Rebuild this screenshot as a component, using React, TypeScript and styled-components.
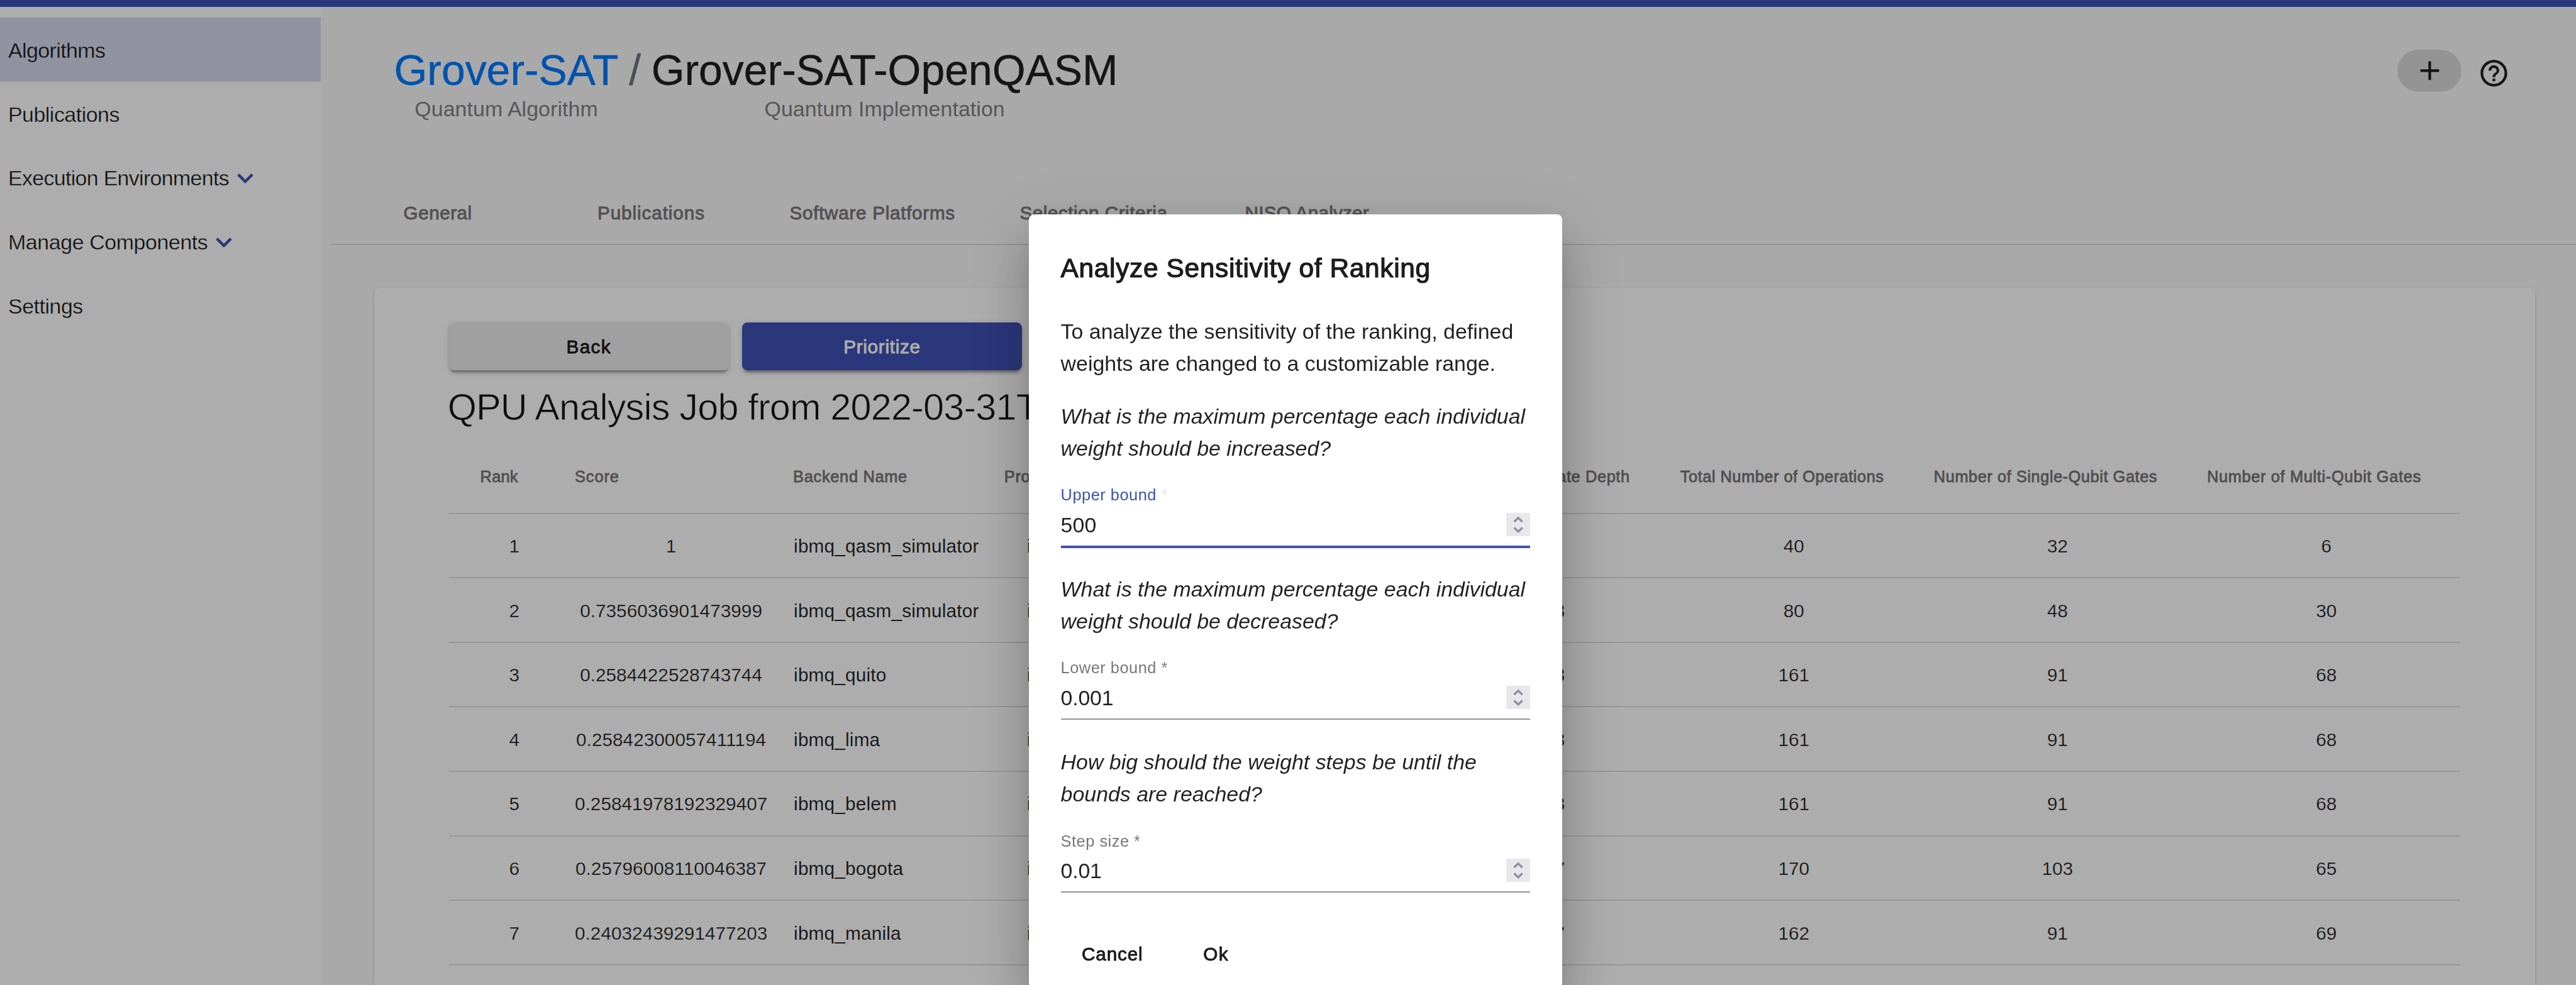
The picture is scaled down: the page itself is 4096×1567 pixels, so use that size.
import React from 'react';
import styled, { createGlobalStyle, css } from 'styled-components';
import { MdAdd, MdHelpOutline } from 'react-icons/md';

const INK = 'rgba(0, 0, 0, 0.87)';
const PRIMARY = '#3f51b5';

const GlobalStyle = createGlobalStyle`
  *, *::before, *::after { box-sizing: border-box; }
  body {
    margin: 0;
    overflow: hidden;
    font-family: "Liberation Sans", Arial, sans-serif;
    color: ${INK};
    background: #fafafa;
  }
  button, input { font: inherit; color: inherit; border: 0; background: none; padding: 0; margin: 0; outline: 0; }
`;

/* Medium weight: the regular face with a hairline in its own colour. */
const medium = css`
  -webkit-text-stroke: 0.9px currentColor;
`;

/* Light weight: the regular face trimmed by a hairline in the surface colour. */
const light = (surface: string, width: number) => css`
  color: #161616;
  -webkit-text-stroke: ${width}px ${surface};
`;

const Page = styled.div`
  width: 4096px;
  height: 1567px;
  display: flex;
  flex-direction: column;
  overflow: hidden;
`;

const TopBar = styled.div`
  flex: none;
  height: 11px;
  background: ${PRIMARY};
`;

const Body = styled.div`
  flex: 1;
  min-height: 0;
  display: flex;
`;

const Sidebar = styled.nav`
  flex: none;
  width: 509.5px;
  padding-top: 17.4px;
  background: #fff;
`;

const NavItem = styled.a<{ $active?: boolean; $spacing: number }>`
  display: flex;
  align-items: center;
  gap: 13px;
  height: 101.8px;
  padding: 2px 0 0 13px;
  font-size: 33.9px;
  letter-spacing: ${(p) => p.$spacing}px;
  background: ${(p) => (p.$active ? '#d7d9ec' : '#fff')};
  ${(p) => light(p.$active ? '#d7d9ec' : '#fff', 0.35)}
`;

const Main = styled.main`
  flex: 1;
  min-width: 0;
  display: flex;
  flex-direction: column;
`;

const Header = styled.header`
  flex: none;
  display: flex;
  justify-content: space-between;
  align-items: flex-start;
  height: 278.5px;
  padding: 60.6px 105.6px 0 117px;
`;

const Breadcrumbs = styled.div`
  display: flex;
  align-items: flex-start;
  gap: 16.6px;
`;

const Crumb = styled.div`
  display: flex;
  flex-direction: column;
  align-items: center;
`;

const CrumbTitle = styled.span<{ $color?: string; $spacing?: number }>`
  font-size: 67.9px;
  line-height: 80px;
  white-space: nowrap;
  color: ${(p) => p.$color ?? INK};
  letter-spacing: ${(p) => p.$spacing ?? 0}px;
  -webkit-text-stroke: 0.4px currentColor;
`;

const CrumbKind = styled.span`
  margin-top: 1px;
  font-size: 33.9px;
  line-height: 40px;
  letter-spacing: 0.08px;
  color: #808080;
`;

const Actions = styled.div`
  display: flex;
  align-items: center;
  gap: 25.6px;
  padding-top: 3px;
`;

const PillButton = styled.button`
  display: flex;
  align-items: center;
  justify-content: center;
  width: 101.6px;
  height: 67.6px;
  margin-top: 4px;
  border-radius: 34px;
  font-size: 50.9px;
  background: rgba(0, 0, 0, 0.12);
`;

const HelpButton = styled.button`
  display: flex;
  margin-top: 12px;
  font-size: 50.9px;
`;

const Tabs = styled.div`
  flex: none;
  display: flex;
  height: 100px;
  margin-left: 17px;
  border-bottom: 2px solid rgba(0, 0, 0, 0.12);
`;

const Tab = styled.div<{ $spacing: number }>`
  display: flex;
  align-items: center;
  justify-content: center;
  min-width: 339.3px;
  padding: 0 50.4px;
  font-size: 29.7px;
  white-space: nowrap;
  color: #787878;
  letter-spacing: ${(p) => p.$spacing}px;
  ${medium}
`;

const Card = styled.section`
  flex: 1;
  margin: 68px 65px 0 85.3px;
  padding: 55.2px 118.6px 0 118.9px;
  border-radius: 8.5px 8.5px 0 0;
  background: #fff;
  box-shadow: 0 4.2px 2.1px -2.1px rgba(0, 0, 0, 0.2), 0 2.1px 2.1px rgba(0, 0, 0, 0.14),
    0 2.1px 6.4px rgba(0, 0, 0, 0.12);
`;

const ButtonRow = styled.div`
  display: flex;
  gap: 21.3px;
`;

const RaisedButton = styled.button<{ $primary?: boolean; $spacing: number }>`
  width: 445px;
  height: 76.4px;
  padding-top: 2px;
  border-radius: 8.5px;
  font-size: 29.7px;
  letter-spacing: ${(p) => p.$spacing}px;
  color: ${(p) => (p.$primary ? '#fff' : INK)};
  background: ${(p) => (p.$primary ? PRIMARY : '#ececec')};
  box-shadow: 0 6.4px 2.1px -4.2px rgba(0, 0, 0, 0.2), 0 4.2px 4.2px rgba(0, 0, 0, 0.14),
    0 2.1px 10.6px rgba(0, 0, 0, 0.12);
  ${medium}
`;

const JobTitle = styled.h1`
  margin: 25px 0 19.5px -2px;
  font-size: 59.4px;
  font-weight: 400;
  line-height: 68px;
  letter-spacing: -0.84px;
  white-space: nowrap;
  ${light('#fff', 0.8)}
`;

const TableRow = styled.div<{ $head?: boolean }>`
  display: grid;
  grid-template-columns: 150.4px 347.1px 335.8px 703.4px 371.5px 403.1px 434.3px 1fr;
  align-items: center;
  height: ${(p) => (p.$head ? 116 : 102.63)}px;
  padding: 0 0 0 49.9px;
  border-bottom: 2px solid rgba(0, 0, 0, 0.12);
`;

const HeadCell = styled.div<{ $width?: number; $spacing: number }>`
  width: ${(p) => (p.$width ? `${p.$width}px` : 'auto')};
  text-align: ${(p) => (p.$width ? 'right' : 'left')};
  font-size: 25.4px;
  letter-spacing: ${(p) => p.$spacing}px;
  white-space: nowrap;
  color: #757575;
  -webkit-text-stroke: 0.8px currentColor;
`;

const NumberCell = styled.div<{ $width: number }>`
  width: ${(p) => p.$width}px;
  padding-top: 2px;
  text-align: center;
  font-size: 29.7px;
  white-space: nowrap;
  letter-spacing: 0.05px;
  ${light('#fff', 0.3)}
`;

const TextCell = styled.div<{ $indent?: number }>`
  padding: 2px 0 0 ${(p) => p.$indent ?? 1}px;
  font-size: 29.7px;
  letter-spacing: 0.22px;
  white-space: nowrap;
`;

const Backdrop = styled.div`
  position: fixed;
  inset: 0;
  display: flex;
  justify-content: center;
  align-items: flex-start;
  padding: 340.5px 0 0 24px;
  overflow: hidden;
  background: rgba(0, 0, 0, 0.32);
`;

const Dialog = styled.div`
  flex: none;
  width: 848px;
  height: 1231px;
  padding: 51.7px 50.9px 0 50.6px;
  border-radius: 8.5px;
  background: #fff;
  box-shadow: 0 23px 32px -15px rgba(0, 0, 0, 0.2), 0 51px 81px 6px rgba(0, 0, 0, 0.14),
    0 19px 98px 17px rgba(0, 0, 0, 0.12);
`;

const DialogTitle = styled.h2`
  margin: 0 0 40px;
  font-size: 42.4px;
  font-weight: 400;
  line-height: 70px;
  letter-spacing: 0.68px;
  white-space: nowrap;
  -webkit-text-stroke: 1.2px currentColor;
`;

const Paragraph = styled.p`
  margin: 0 0 32.3px;
  font-size: 33.9px;
  line-height: 51.1px;
  white-space: nowrap;
`;

const Block = styled.div`
  height: 275.2px;
`;

const Question = styled(Paragraph)`
  font-style: italic;
`;

const FieldLabel = styled.label<{ $focused?: boolean }>`
  display: block;
  font-size: 25.4px;
  line-height: 32px;
  letter-spacing: 0.5px;
  color: ${(p) => (p.$focused ? PRIMARY : 'rgba(0, 0, 0, 0.54)')};
`;

const Required = styled.span<{ $focused?: boolean }>`
  color: ${(p) => (p.$focused ? '#e8e8e8' : 'inherit')};
`;

const InputRow = styled.div<{ $focused?: boolean }>`
  display: flex;
  justify-content: space-between;
  align-items: flex-start;
  height: ${(p) => (p.$focused ? 56.2 : 54)}px;
  margin-top: 12.4px;
  border-bottom: ${(p) => (p.$focused ? `4px solid ${PRIMARY}` : '2px solid rgba(0, 0, 0, 0.42)')};
`;

const Value = styled.span<{ $spacing: number }>`
  padding-top: 1.3px;
  font-size: 33.9px;
  line-height: 37.5px;
  letter-spacing: ${(p) => p.$spacing}px;
`;

const Spinner = styled.svg`
  width: 38.2px;
  height: 37.5px;
  background: #e8e7ec;
`;

const DialogActions = styled.div`
  display: flex;
  gap: 29px;
  padding-top: 17.4px;
`;

const FlatButton = styled.button<{ $spacing: number }>`
  height: 76.4px;
  padding: 0 33.4px;
  font-size: 29.7px;
  letter-spacing: ${(p) => p.$spacing}px;
  ${medium}
`;

const Chevron = () => (
  <svg width="26" height="18" viewBox="0 0 26 18" fill="none" stroke={PRIMARY} strokeWidth="4.4">
    <path d="M1.8 2.6 13 13.8 24.2 2.6" />
  </svg>
);

const nav = [
  { label: 'Algorithms', spacing: -0.57, active: true },
  { label: 'Publications', spacing: -0.49 },
  { label: 'Execution Environments', spacing: -0.66, expandable: true },
  { label: 'Manage Components', spacing: -0.39, expandable: true },
  { label: 'Settings', spacing: -0.46 },
];

const tabs: [string, number][] = [
  ['General', 0.5],
  ['Publications', 0.9],
  ['Software Platforms', 0.7],
  ['Selection Criteria', 0.5],
  ['NISQ Analyzer', 0.2],
];

const rows: [number, string, string, string, number, number, number, number][] = [
  [1, '1', 'ibmq_qasm_simulator', 'ibm', 5, 40, 32, 6],
  [2, '0.7356036901473999', 'ibmq_qasm_simulator', 'ibm', 23, 80, 48, 30],
  [3, '0.2584422528743744', 'ibmq_quito', 'ibm', 53, 161, 91, 68],
  [4, '0.25842300057411194', 'ibmq_lima', 'ibm', 53, 161, 91, 68],
  [5, '0.25841978192329407', 'ibmq_belem', 'ibm', 53, 161, 91, 68],
  [6, '0.25796008110046387', 'ibmq_bogota', 'ibm', 57, 170, 103, 65],
  [7, '0.24032439291477203', 'ibmq_manila', 'ibm', 57, 162, 91, 69],
];

const fields = [
  {
    question: ['What is the maximum percentage each individual', 'weight should be increased?'],
    label: 'Upper bound',
    value: '500',
    spacing: 0.1,
    focused: true,
  },
  {
    question: ['What is the maximum percentage each individual', 'weight should be decreased?'],
    label: 'Lower bound',
    value: '0.001',
    spacing: -0.2,
  },
  {
    question: ['How big should the weight steps be until the', 'bounds are reached?'],
    label: 'Step size',
    value: '0.01',
    spacing: -0.2,
  },
];

export default function App() {
  return (
    <>
      <GlobalStyle />
      <Page>
        <TopBar />
        <Body>
          <Sidebar>
            {nav.map((item) => (
              <NavItem key={item.label} $active={item.active} $spacing={item.spacing}>
                {item.label}
                {item.expandable && <Chevron />}
              </NavItem>
            ))}
          </Sidebar>
          <Main>
            <Header>
              <Breadcrumbs>
                <Crumb>
                  <CrumbTitle $color="#007bff">Grover-SAT</CrumbTitle>
                  <CrumbKind>Quantum Algorithm</CrumbKind>
                </Crumb>
                <CrumbTitle $color="#6c757d">/</CrumbTitle>
                <Crumb>
                  <CrumbTitle $spacing={0}>Grover-SAT-OpenQASM</CrumbTitle>
                  <CrumbKind>Quantum Implementation</CrumbKind>
                </Crumb>
              </Breadcrumbs>
              <Actions>
                <PillButton>
                  <MdAdd />
                </PillButton>
                <HelpButton>
                  <MdHelpOutline />
                </HelpButton>
              </Actions>
            </Header>
            <Tabs>
              {tabs.map(([label, spacing]) => (
                <Tab key={label} $spacing={spacing}>
                  {label}
                </Tab>
              ))}
            </Tabs>
            <Card>
              <ButtonRow>
                <RaisedButton $spacing={1.3}>Back</RaisedButton>
                <RaisedButton $primary $spacing={0.7}>
                  Prioritize
                </RaisedButton>
              </ButtonRow>
              <JobTitle>QPU Analysis Job from 2022-03-31T</JobTitle>
              <TableRow $head>
                <HeadCell $spacing={0.23}>Rank</HeadCell>
                <HeadCell $spacing={0.9}>Score</HeadCell>
                <HeadCell $spacing={0.69}>Backend Name</HeadCell>
                <HeadCell $spacing={0.6}>Provider</HeadCell>
                <HeadCell $spacing={0.6} $width={291.5}>
                  Multi-Qubit Gate Depth
                </HeadCell>
                <HeadCell $spacing={0.51}>Total Number of Operations</HeadCell>
                <HeadCell $spacing={0.55}>Number of Single-Qubit Gates</HeadCell>
                <HeadCell $spacing={0.65}>Number of Multi-Qubit Gates</HeadCell>
              </TableRow>
              {rows.map(([rank, score, backend, provider, depth, total, single, multi]) => (
                <TableRow key={rank}>
                  <NumberCell $width={108.2}>{rank}</NumberCell>
                  <NumberCell $width={306.2}>{score}</NumberCell>
                  <TextCell>{backend}</TextCell>
                  <TextCell $indent={36}>{provider}</TextCell>
                  <NumberCell $width={343}>{depth}</NumberCell>
                  <NumberCell $width={361}>{total}</NumberCell>
                  <NumberCell $width={393.4}>{single}</NumberCell>
                  <NumberCell $width={379.6}>{multi}</NumberCell>
                </TableRow>
              ))}
            </Card>
          </Main>
        </Body>
      </Page>
      <Backdrop>
        <Dialog>
          <DialogTitle>Analyze Sensitivity of Ranking</DialogTitle>
          <Paragraph>
            To analyze the sensitivity of the ranking, defined
            <br />
            weights are changed to a customizable range.
          </Paragraph>
          {fields.map((f) => (
            <Block key={f.label}>
              <Question>
                {f.question[0]}
                <br />
                {f.question[1]}
              </Question>
              <FieldLabel $focused={f.focused}>
                {f.label}
                <Required $focused={f.focused}> *</Required>
              </FieldLabel>
              <InputRow $focused={f.focused}>
                <Value $spacing={f.spacing}>{f.value}</Value>
                <Spinner viewBox="0 0 38.2 37.5" fill="none" stroke="#8f8f9d" strokeWidth="3.4">
                  <path d="M12.6 14 19.1 7.8 25.6 14M12.6 23.5 19.1 29.7 25.6 23.5" />
                </Spinner>
              </InputRow>
            </Block>
          ))}
          <DialogActions>
            <FlatButton $spacing={0.85}>Cancel</FlatButton>
            <FlatButton $spacing={1.5}>Ok</FlatButton>
          </DialogActions>
        </Dialog>
      </Backdrop>
    </>
  );
}
